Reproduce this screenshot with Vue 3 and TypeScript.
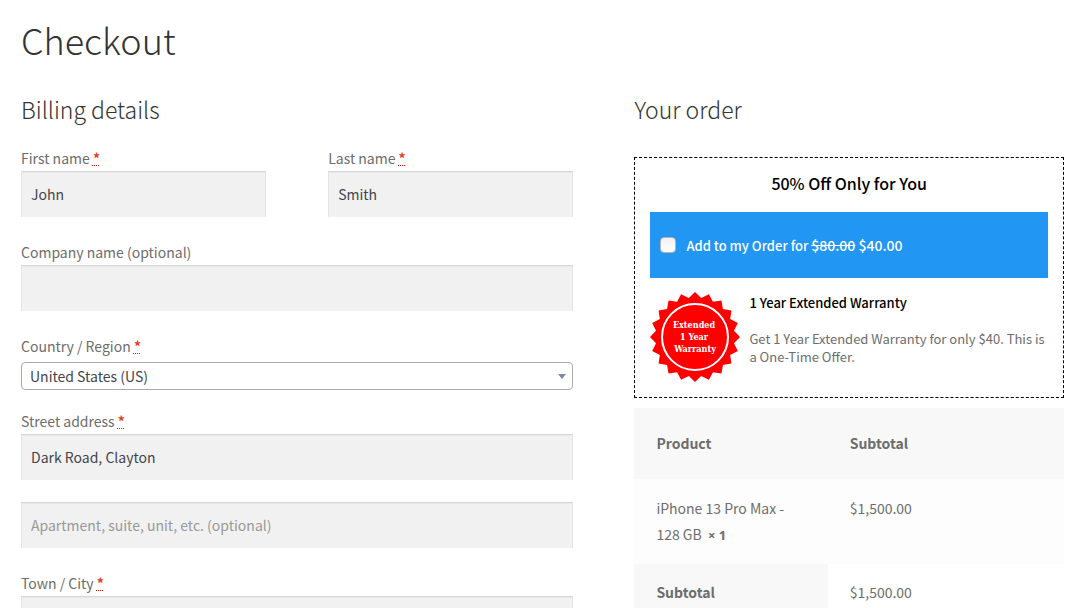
<script setup lang="ts">
import { ref } from 'vue'

interface Line {
  name: string
  quantity: number
  price: string
}

const firstName = ref<string>('John')
const lastName = ref<string>('Smith')
const company = ref<string>('')
const country = ref<string>('US')
const street = ref<string>('Dark Road, Clayton')
const apartment = ref<string>('')
const city = ref<string>('')
const addOffer = ref<boolean>(false)

const lines: Line[] = [{ name: 'iPhone 13 Pro Max - 128 GB', quantity: 1, price: '$1,500.00' }]

// Twenty-pointed seal: alternate outer and inner radius around the centre.
const seal: string = Array.from({ length: 40 }, (_, i) => {
  const radius = i % 2 === 0 ? 45 : 39.5
  const angle = (i * Math.PI) / 20
  return `${(45 + radius * Math.sin(angle)).toFixed(2)},${(45 - radius * Math.cos(angle)).toFixed(2)}`
}).join(' ')
</script>

<template>
  <main class="page">
    <h1>Checkout</h1>
    <form class="checkout" @submit.prevent>
      <section>
        <h2>Billing details</h2>
        <div class="names">
          <div class="field">
            <label for="first">First name <abbr title="required">*</abbr></label>
            <input id="first" v-model="firstName" type="text" />
          </div>
          <div class="field">
            <label for="last">Last name <abbr title="required">*</abbr></label>
            <input id="last" v-model="lastName" type="text" />
          </div>
        </div>
        <div class="field">
          <label for="company">Company name (optional)</label>
          <input id="company" v-model="company" type="text" />
        </div>
        <div class="field country">
          <label for="country">Country / Region <abbr title="required">*</abbr></label>
          <div class="select">
            <select id="country" v-model="country">
              <option value="US">United States (US)</option>
            </select>
            <svg class="arrow" viewBox="0 0 8 5" aria-hidden="true"><path d="M0 0h8L4 5z" /></svg>
          </div>
        </div>
        <div class="field">
          <label for="street">Street address <abbr title="required">*</abbr></label>
          <input id="street" v-model="street" type="text" />
        </div>
        <div class="field">
          <input
            v-model="apartment"
            type="text"
            aria-label="Apartment, suite, unit, etc. (optional)"
            placeholder="Apartment, suite, unit, etc. (optional)"
          />
        </div>
        <div class="field">
          <label for="city">Town / City <abbr title="required">*</abbr></label>
          <input id="city" v-model="city" type="text" />
        </div>
      </section>

      <section>
        <h2>Your order</h2>
        <div class="offer">
          <h3>50% Off Only for You</h3>
          <label class="bump">
            <input v-model="addOffer" type="checkbox" />
            <span>Add to my Order for <span class="price"><del>$80.00</del> $40.00</span></span>
          </label>
          <div class="detail">
            <svg class="badge" viewBox="0 0 90 90" role="img" aria-label="Extended 1 Year Warranty">
              <polygon :points="seal" fill="#ff0000" />
              <circle cx="45" cy="45" r="33" fill="none" stroke="#ffffff" stroke-width="2" />
              <text x="44" y="36">Extended</text>
              <text x="44" y="48">1 Year</text>
              <text x="45" y="60">Warranty</text>
            </svg>
            <div>
              <h4>1 Year Extended Warranty</h4>
              <p>Get 1 Year Extended Warranty for only $40. This is a One-Time Offer.</p>
            </div>
          </div>
        </div>
        <table>
          <thead>
            <tr>
              <th scope="col" class="product">Product</th>
              <th scope="col">Subtotal</th>
            </tr>
          </thead>
          <tbody>
            <tr v-for="line in lines" :key="line.name">
              <td>{{ line.name }}&nbsp; <strong class="quantity">×&nbsp;{{ line.quantity }}</strong></td>
              <td>{{ line.price }}</td>
            </tr>
          </tbody>
          <tfoot>
            <tr>
              <th scope="row">Subtotal</th>
              <td>$1,500.00</td>
            </tr>
          </tfoot>
        </table>
      </section>
    </form>
  </main>
</template>

<style>
body {
  margin: 0;
  background: #ffffff;
}
</style>

<style scoped>
.page {
  box-sizing: border-box;
  padding: 16px 16px 0 21px;
  color: #6d6d6d;
  font-family: "Noto Sans CJK SC", "Noto Sans", sans-serif;
  font-size: 14px;
  line-height: 26px;
}
h1,
h2 {
  margin: 0;
  color: #333333;
  font-weight: 300;
}
h1 {
  font-size: 36px;
  line-height: 46px;
  margin-bottom: 31px;
}
h2 {
  font-size: 23px;
  line-height: 32px;
  margin-bottom: 20px;
}
.checkout {
  display: grid;
  grid-template-columns: 9fr 7fr;
  gap: 61px;
  align-items: start;
}
.names {
  display: grid;
  grid-template-columns: 1fr 1fr;
  gap: 62px;
  margin-bottom: 22px;
}
.field {
  margin-bottom: 22px;
}
.names .field {
  margin-bottom: 0;
}
.field.country {
  margin-bottom: 18px;
}
.field label {
  display: block;
}
abbr {
  color: #e2401c;
  font-weight: 700;
  text-decoration: underline dotted #ff0000 1px;
}
.field input {
  display: block;
  box-sizing: border-box;
  width: 100%;
  height: 46px;
  padding: 0 9px 2px;
  border: 1px solid #e4e4e4;
  border-top-color: #d6d6d6;
  border-bottom: 0;
  border-radius: 0;
  outline: 0;
  background: #f1f1f1;
  box-shadow: inset 0 1px 0 #e9e9e9;
  color: #43454b;
  font: inherit;
}
.field input::placeholder {
  color: #999999;
  opacity: 1;
}
.select {
  position: relative;
  margin-top: 3px;
}
select {
  display: block;
  appearance: none;
  box-sizing: border-box;
  width: 100%;
  height: 28px;
  padding: 0 20px 0 8px;
  border: 1px solid #aaaaaa;
  border-radius: 4px;
  background: #ffffff;
  color: #43454b;
  font: inherit;
}
.arrow {
  position: absolute;
  top: 12px;
  right: 7px;
  width: 8px;
  height: 5px;
  fill: #7f88ab;
  pointer-events: none;
}
.offer {
  margin: 32px 0 10px;
  padding: 12px 15px 15px;
  border: 1px dashed #000000;
}
h3,
h4 {
  margin: 0;
  color: #000000;
  font-weight: 500;
}
h3 {
  margin-bottom: 16px;
  font-size: 16px;
  text-align: center;
}
.bump {
  display: flex;
  align-items: center;
  gap: 10px;
  height: 66px;
  padding: 0 10px;
  background: #2196f3;
  color: #ffffff;
  font-size: 13px;
  font-weight: 500;
}
.price {
  font-size: 14px;
}
.bump input {
  appearance: none;
  box-sizing: border-box;
  width: 16px;
  height: 16px;
  margin: 0;
  border: 1px solid #b5b5b5;
  border-radius: 4px;
  background: linear-gradient(#f1f1f1, #ffffff);
}
.bump input:checked {
  background: #43454b;
}
.detail {
  display: flex;
  gap: 9px;
  padding-top: 14px;
}
.badge {
  flex: none;
  width: 90px;
  height: 90px;
}
.badge text {
  fill: #ffffff;
  font-family: "DejaVu Serif Condensed", "DejaVu Serif", serif;
  font-size: 9px;
  font-weight: 700;
  text-anchor: middle;
}
h4 {
  margin: 2px 0 18px;
  font-size: 13px;
  line-height: 18px;
}
.detail p {
  margin: 0;
  font-size: 13px;
  line-height: 18px;
}
table {
  width: 100%;
  border-collapse: collapse;
  text-align: left;
}
th,
td {
  padding: 16px 22px;
  vertical-align: top;
}
th {
  background: #f8f8f8;
  font-weight: 700;
}
thead th {
  padding-top: 22px;
  padding-bottom: 23px;
}
.product {
  width: 45%;
  box-sizing: border-box;
}
tbody td {
  background: #fdfdfd;
}
.quantity {
  display: inline-block;
  font-family: "Noto Sans", sans-serif;
  font-size: 13px;
}
tfoot th,
tfoot td {
  padding-top: 15px;
}
</style>
